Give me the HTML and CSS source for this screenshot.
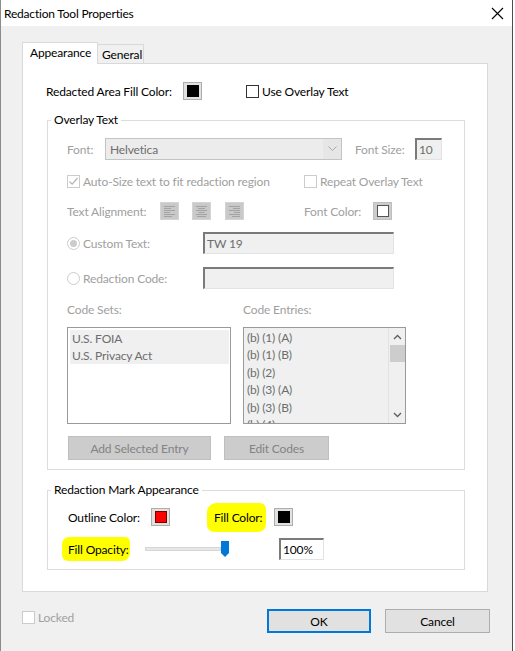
FILE: index.html
```html
<!DOCTYPE html>
<html>
<head>
<meta charset="utf-8">
<link rel="stylesheet" href="styles.css">
</head>
<body>
<div class="window">
  <div class="titlebar">
    <span class="title">Redaction Tool Properties</span>
    <svg class="close" width="13" height="13" viewBox="0 0 13 13"><path d="M1 1L12 12M12 1L1 12" stroke="#000" stroke-width="1.1" fill="none"/></svg>
  </div>
  <div class="client">
    <div class="tabs">
      <div class="tab active">Appearance</div>
      <div class="tab">General</div>
    </div>
    <div class="panel">
      <div class="row toprow">
        <span class="lbl w137">Redacted Area Fill Color:</span>
        <span class="swatch"><span class="chip black"></span></span>
        <span class="check enabled ml44"><span class="box"></span><span>Use Overlay Text</span></span>
      </div>

      <fieldset class="group overlay">
        <legend>Overlay Text</legend>
        <div class="row h22">
          <span class="lbl dis w38">Font:</span>
          <span class="select"><span class="seltext">Helvetica</span><span class="selarrow"><svg width="9" height="6" viewBox="0 0 9 6"><path d="M0.5 0.5L4.5 4.5L8.5 0.5" stroke="#a8a8a8" fill="none"/></svg></span></span>
          <span class="lbl dis w60 ml13">Font Size:</span>
          <span class="input sunken w27">10</span>
        </div>
        <div class="row h16 mt13">
          <span class="check w237"><span class="box checked"><svg width="11" height="11" viewBox="0 0 11 11"><path d="M1.5 5.5L4.2 8.2L9.5 2" stroke="#b4b4b4" stroke-width="1.2" fill="none"/></svg></span><span>Auto-Size text to fit redaction region</span></span>
          <span class="check"><span class="box"></span><span>Repeat Overlay Text</span></span>
        </div>
        <div class="row h18 mt13">
          <span class="lbl dis w93">Text Alignment:</span>
          <span class="align"><svg width="19" height="18" viewBox="0 0 19 18"><rect x="0.5" y="0.5" width="18" height="17" fill="#c9c9c9" stroke="#d4d4d4"/><g stroke="#a3a3a3"><path d="M4 4.5H15M4 6.5H11M4 8.5H15M4 10.5H10M4 12.5H15M4 14.5H12"/></g></svg></span>
          <span class="align ml13"><svg width="19" height="18" viewBox="0 0 19 18"><rect x="0.5" y="0.5" width="18" height="17" fill="#c9c9c9" stroke="#d4d4d4"/><g stroke="#a3a3a3"><path d="M4 4.5H15M6 6.5H13M4 8.5H15M6.5 10.5H12.5M4 12.5H15M5 14.5H14"/></g></svg></span>
          <span class="align ml14"><svg width="19" height="18" viewBox="0 0 19 18"><rect x="0.5" y="0.5" width="18" height="17" fill="#c9c9c9" stroke="#d4d4d4"/><g stroke="#a3a3a3"><path d="M4 4.5H15M8 6.5H15M4 8.5H15M9 10.5H15M4 12.5H15M7 14.5H15"/></g></svg></span>
          <span class="lbl dis w69 ml60">Font Color:</span>
          <span class="swatch dimmed"><span class="chip white"></span></span>
        </div>
        <div class="row h22 mt12">
          <span class="radio w136"><span class="circle on"></span><span>Custom Text:</span></span>
          <span class="input sunken w191">TW 19</span>
        </div>
        <div class="row h22 mt13">
          <span class="radio w136"><span class="circle"></span><span>Redaction Code:</span></span>
          <span class="input sunken w191"></span>
        </div>
        <div class="row h16 mt12">
          <span class="lbl dis w176">Code Sets:</span>
          <span class="lbl dis">Code Entries:</span>
        </div>
        <div class="row lists mt10">
          <div class="list sets">
            <div class="item sel">U.S. FOIA</div>
            <div class="item sel">U.S. Privacy Act</div>
          </div>
          <div class="list entries">
            <div class="items">
              <div class="item">(b) (1) (A)</div>
              <div class="item">(b) (1) (B)</div>
              <div class="item">(b) (2)</div>
              <div class="item">(b) (3) (A)</div>
              <div class="item">(b) (3) (B)</div>
              <div class="item">(b) (4)</div>
            </div>
            <div class="scrollbar">
              <svg class="arrow" width="15" height="16" viewBox="0 0 15 16"><path d="M4 10L7.5 6.5L11 10" stroke="#606060" stroke-width="1.4" fill="none"/></svg>
              <div class="thumb"></div>
              <div class="spacer"></div>
              <svg class="arrow" width="15" height="16" viewBox="0 0 15 16"><path d="M4 6L7.5 9.5L11 6" stroke="#606060" stroke-width="1.4" fill="none"/></svg>
            </div>
          </div>
        </div>
        <div class="row h24 mt12">
          <span class="btn disabled w143 ml1">Add Selected Entry</span>
          <span class="btn disabled w105 ml13">Edit Codes</span>
        </div>
      </fieldset>

      <fieldset class="group mark">
        <legend>Redaction Mark Appearance</legend>
        <div class="row h18">
          <span class="lbl w83 ml1">Outline Color:</span>
          <span class="swatch"><span class="chip red"></span></span>
          <span class="hl hl-color">Fill Color:</span>
          <span class="swatch"><span class="chip black"></span></span>
        </div>
        <div class="row h22 mt12">
          <span class="hl hl-opacity">Fill Opacity:</span>
          <span class="slider"><span class="track"></span><svg class="thumbsl" width="8" height="16" viewBox="0 0 8 16"><path d="M0 0H8V12L4 16L0 12Z" fill="#0078d7"/></svg></span>
          <span class="input sunken white w45 ml50">100%</span>
        </div>
      </fieldset>
    </div>

    <div class="footer">
      <span class="check locked"><span class="box"></span><span>Locked</span></span>
      <span class="grow"></span>
      <span class="btn default">OK</span>
      <span class="btn cancel">Cancel</span>
    </div>
  </div>
</div>
</body>
</html>
```

FILE: styles.css
```css
* { box-sizing: border-box; }
body {
  margin: 0;
  background: #fff;
  font-family: Lato, "Liberation Sans", sans-serif;
  font-size: 12px;
  letter-spacing: -0.15px;
  color: #000;
}
.window {
  width: 513px;
  height: 651px;
  border-left: 1px solid #8c8c8c;
  border-right: 1px solid #4d4d4d;
  background: #f0f0f0;
  overflow: hidden;
}
.titlebar {
  height: 26px;
  background: #fff;
  display: flex;
  align-items: center;
  justify-content: space-between;
  padding: 0 8px 0 3px;
}
.title { font-size: 12px; letter-spacing: -0.2px; }
.client { padding: 16px 0 0 21px; }
.tabs {
  display: flex;
  align-items: flex-end;
  height: 21px;
}
.tab {
  height: 19px;
  padding: 0 4px;
  border: 1px solid #d9d9d9;
  border-bottom: none;
  border-left: none;
  display: flex;
  align-items: center;
  background: #f0f0f0;
  line-height: 1;
}
.tab.active {
  height: 22px;
  width: 76px;
  border-left: 1px solid #d9d9d9;
  background: #fff;
  margin-bottom: -1px;
  padding: 0 0 2px 7px;
  position: relative;
  z-index: 1;
}
.tab:not(.active) { width: 46px; padding-left: 4px; padding-top: 2px; }
.panel {
  width: 466px;
  height: 529px;
  background: #fff;
  border: 1px solid #d9d9d9;
  padding: 18px 21px 0 24px;
}
.row { display: flex; align-items: center; }
.toprow { height: 18px; margin-left: -1px; }
.h16 { height: 16px; }
.h18 { height: 18px; }
.h22 { height: 22px; }
.h24 { height: 24px; }
.mt10 { margin-top: 10px; }
.mt12 { margin-top: 12px; }
.mt13 { margin-top: 13px; }
.ml1 { margin-left: 1px; }
.ml13 { margin-left: 13px; }
.ml14 { margin-left: 14px; }
.ml44 { margin-left: 44px; }
.ml50 { margin-left: 50px; }
.ml60 { margin-left: 60px; }
.w27 { width: 27px; }
.w38 { width: 38px; }
.w45 { width: 45px; }
.w60 { width: 60px; }
.w69 { width: 69px; }
.w83 { width: 83px; }
.w93 { width: 93px; }
.w105 { width: 105px; }
.w136 { width: 136px; }
.w137 { width: 137px; }
.w143 { width: 143px; }
.w176 { width: 176px; }
.w191 { width: 191px; }
.w237 { width: 237px; }
.lbl { white-space: nowrap; flex: none; }
.dis { color: #a0a0a0; }

.swatch {
  flex: none;
  width: 19px;
  height: 18px;
  background: #e1e1e1;
  border: 1px solid #adadad;
  display: flex;
  align-items: center;
  justify-content: center;
}
.swatch.dimmed { background: #cccccc; border-color: #bfbfbf; }
.chip { width: 12px; height: 12px; border: 1px solid #000; }
.chip.black { background: #000; }
.chip.red { background: #ff0000; border-color: #7a0000; }
.chip.white { background: #fff; border-color: #555; }

.check, .radio {
  display: flex;
  align-items: center;
  color: #a0a0a0;
  white-space: nowrap;
  flex: none;
}
.check .box {
  width: 13px;
  height: 13px;
  border: 1px solid #cccccc;
  background: #fff;
  margin-right: 3px;
  display: flex;
  align-items: center;
  justify-content: center;
}
.check.enabled { color: #000; }
.check.enabled .box { border-color: #333; }
.radio .circle {
  width: 13px;
  height: 13px;
  border-radius: 50%;
  border: 1px solid #cccccc;
  background: #fff;
  margin-right: 3px;
  display: flex;
  align-items: center;
  justify-content: center;
}
.radio .circle.on::after {
  content: "";
  width: 7px;
  height: 7px;
  border-radius: 50%;
  background: #cccccc;
}

.group {
  margin: 12px 0 0 0;
  border: 1px solid #dcdcdc;
  padding: 10px 19px 9px 19px;
  min-width: 0;
  width: 418px;
}
.group legend {
  padding: 0 3px;
  margin-left: -16px;
  line-height: 16px;
  font-size: 12px;
}
.mark { padding-top: 10px; padding-bottom: 9px; }

.select {
  flex: none;
  width: 237px;
  height: 22px;
  border: 1px solid #c4c4c4;
  background: #ececec;
  display: flex;
  align-items: center;
}
.seltext {
  flex: 1;
  height: 100%;
  display: flex;
  align-items: center;
  padding-left: 4px;
  color: #6d6d6d;
}
.selarrow {
  width: 18px;
  height: 100%;
  display: flex;
  align-items: center;
  justify-content: center;
  background: #e6e6e6;
}
.input {
  flex: none;
  height: 22px;
  display: flex;
  align-items: center;
  padding-left: 2px;
  color: #6d6d6d;
  background: #f0f0f0;
}
.sunken {
  border-top: 2px solid #7a7a7a;
  border-left: 2px solid #7a7a7a;
  border-right: 1px solid #e3e3e3;
  border-bottom: 1px solid #e3e3e3;
}
.input.white { background: #fff; color: #000; }

.align { flex: none; display: flex; }

.lists { align-items: stretch; height: 97px; }
.list {
  flex: none;
  height: 97px;
  border: 1px solid #9a9a9a;
  overflow: hidden;
  color: #6d6d6d;
}
.list.sets {
  width: 164px;
  background: #fff;
  padding: 2px 1px 0 2px;
}
.list.sets .item {
  height: 17px;
  line-height: 17px;
  padding-left: 2px;
  background: #f0f0f0;
}
.list.entries {
  width: 163px;
  margin-left: 12px;
  background: #f0f0f0;
  display: flex;
}
.items { flex: 1; padding: 1px 0 0 3px; }
.items .item { height: 17.4px; line-height: 17.4px; white-space: nowrap; }
.scrollbar {
  width: 17px;
  border-left: 1px solid #e2e2e2;
  display: flex;
  flex-direction: column;
  align-items: center;
  padding-top: 1px;
}
.scrollbar .arrow { flex: none; }
.scrollbar .thumb { width: 15px; height: 17px; background: #cdcdcd; flex: none; }
.scrollbar .spacer { flex: 1; }

.btn {
  flex: none;
  height: 24px;
  display: flex;
  align-items: center;
  justify-content: center;
  border: 1px solid #adadad;
  background: #e1e1e1;
}
.btn.disabled { background: #cccccc; border-color: #bfbfbf; color: #838383; }

.hl {
  flex: none;
  background: #ffff00;
  white-space: nowrap;
  display: flex;
  align-items: center;
}
.hl-color {
  height: 29px;
  margin-left: 37px;
  padding: 0 5px 0 7px;
  width: 59px;
  border-radius: 9px 6px 8px 7px;
  margin-right: 8px;
}
.hl-opacity {
  height: 24px;
  width: 68px;
  margin-left: -5px;
  padding-left: 6px;
  border-radius: 7px 5px 8px 6px;
  margin-right: 15px;
}
.slider {
  flex: none;
  width: 84px;
  height: 16px;
  display: flex;
  align-items: center;
}
.track {
  width: 76px;
  height: 4px;
  background: #e7e7e7;
  border: 1px solid #d6d6d6;
}
.thumbsl { flex: none; }

.footer {
  width: 468px;
  margin-top: 17px;
  display: flex;
  align-items: flex-start;
  height: 24px;
}
.locked { color: #a0a0a0; margin-top: 1px; }
.locked .box { border-color: #cccccc; }
.grow { flex: 1; }
.btn.default { width: 104px; border: 2px solid #0078d7; margin-right: 14px; }
.btn.cancel { width: 105px; }
```
